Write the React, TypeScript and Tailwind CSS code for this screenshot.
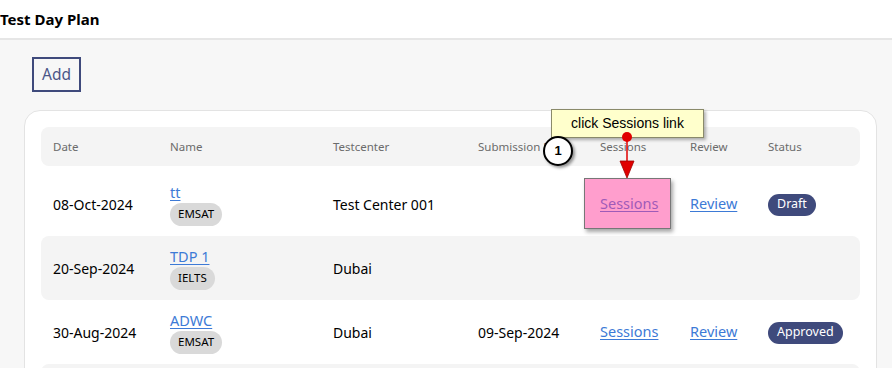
import React from 'react';

type Row = {
  date: string;
  name: string;
  tag: string;
  center: string;
  submission?: string;
  links: boolean;
  status?: 'Draft' | 'Approved';
};

const rows: Row[] = [
  { date: '08-Oct-2024', name: 'tt', tag: 'EMSAT', center: 'Test Center 001', links: true, status: 'Draft' },
  { date: '20-Sep-2024', name: 'TDP 1', tag: 'IELTS', center: 'Dubai', links: false },
  { date: '30-Aug-2024', name: 'ADWC', tag: 'EMSAT', center: 'Dubai', submission: '09-Sep-2024', links: true, status: 'Approved' },
];

const cols = 'grid grid-cols-[117px_163px_145px_122px_90px_78px_105px]';

export default function App() {
  return (
    <div className="relative w-[892px] h-[368px] overflow-hidden bg-[#f7f7f7] font-['Segoe_UI','Noto_Sans',sans-serif] text-black">
      <header className="h-[40px] bg-white border-b-2 border-[#e6e6e6] flex items-center">
        <h1 className="text-[15px] font-bold leading-none">Test Day Plan</h1>
      </header>

      <main className="px-6 pt-[17px]">
        <button className="ml-2 h-[35px] w-[49px] border-2 border-[#3f4a7c] text-[15.5px] text-[#4b5587] bg-transparent">
          Add
        </button>

        <div className="mt-[18px] bg-white border border-[#e3e3e3] rounded-[16px] px-4 pt-4 pb-4 w-[853px]">
          <div className={`${cols} h-[39px] items-center bg-[#f4f4f4] rounded-[8px] text-[11.5px] text-[#6b6b6b]`}>
            <div className="pl-3">Date</div>
            <div className="pl-3">Name</div>
            <div className="pl-3">Testcenter</div>
            <div className="pl-3">Submission Date</div>
            <div className="pl-3">Sessions</div>
            <div className="pl-3">Review</div>
            <div className="pl-3">Status</div>
          </div>

          <div className="mt-[6px] flex flex-col">
            {rows.map((r, i) => (
              <div
                key={i}
                className={`${cols} h-[64px] items-center text-[14px] ${i % 2 === 1 ? 'bg-[#f4f4f4] rounded-[8px]' : ''}`}
              >
                <div className="pl-3">{r.date}</div>
                <div className="pl-3 flex flex-col items-start">
                  <a href="#" className="text-[14.5px] leading-[18px] text-[#3d7ad6] underline underline-offset-2">
                    {r.name}
                  </a>
                  <span className="mt-[2px] h-[23px] px-[8px] flex items-center rounded-full bg-[#d9d9d9] text-[11.5px]">
                    {r.tag}
                  </span>
                </div>
                <div className="pl-3">{r.center}</div>
                <div className="pl-3">{r.submission ?? ''}</div>
                <div className="pl-3">
                  {r.links && (
                    <a href="#" className="text-[14.5px] text-[#3d7ad6] underline underline-offset-2">Sessions</a>
                  )}
                </div>
                <div className="pl-3">
                  {r.links && (
                    <a href="#" className="text-[14.5px] text-[#3d7ad6] underline underline-offset-2">Review</a>
                  )}
                </div>
                <div className="pl-3">
                  {r.status && (
                    <span className="inline-flex h-[22px] items-center px-[9px] rounded-full bg-[#3f4a7c] text-white text-[12.5px]">
                      {r.status}
                    </span>
                  )}
                </div>
              </div>
            ))}
            <div className="h-[64px] bg-[#f4f4f4] rounded-[8px]" />
          </div>
        </div>
      </main>

      {/* highlight box over Sessions link */}
      <div className="absolute left-[584px] top-[178px] w-[87px] h-[51px] bg-[#ff3d9a]/50 border border-[#777] shadow-[2px_3px_4px_rgba(0,0,0,0.35)] pointer-events-none" />

      {/* arrow */}
      <svg className="absolute left-[612px] top-[130px] pointer-events-none" width="30" height="50" viewBox="0 0 30 50">
        <line x1="15" y1="7" x2="15" y2="32" stroke="#e00000" strokeWidth="1.5" />
        <polygon points="8,31 22,31 15,48" fill="#e00000" stroke="#a00000" strokeWidth="0.8" />
      </svg>

      {/* callout */}
      <div className="absolute left-[551px] top-[109px] w-[153px] h-[29px] bg-[#ffffcc] border border-[#8a8a6a] shadow-[2px_2px_3px_rgba(0,0,0,0.3)] flex items-center justify-center font-['Liberation_Sans',Arial,sans-serif] text-[14px] text-black">
        click Sessions link
      </div>
      <div className="absolute left-[622px] top-[132px] w-[10px] h-[10px] rounded-full bg-[#e00000]" />

      {/* step number */}
      <div className="absolute left-[543px] top-[136px] w-[30px] h-[30px] rounded-full bg-white border-2 border-black shadow-[2px_2px_3px_rgba(0,0,0,0.4)] flex items-center justify-center font-['Liberation_Sans',Arial,sans-serif] font-bold text-[13px]">
        1
      </div>
    </div>
  );
}
